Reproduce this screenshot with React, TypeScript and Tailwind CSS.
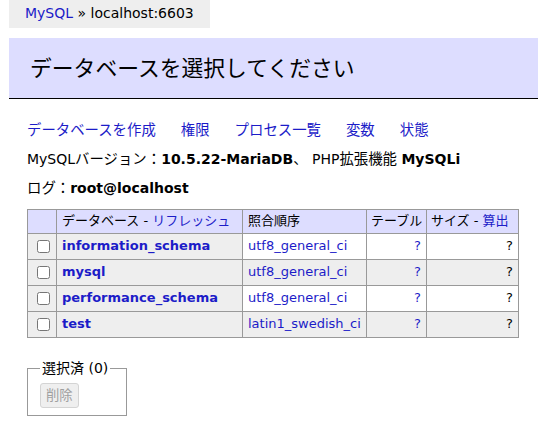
import React from 'react';

const databases = [
  { name: 'information_schema', collation: 'utf8_general_ci' },
  { name: 'mysql', collation: 'utf8_general_ci' },
  { name: 'performance_schema', collation: 'utf8_general_ci' },
  { name: 'test', collation: 'latin1_swedish_ci' },
];

const links = ['データベースを作成', '権限', 'プロセス一覧', '変数', '状態'];

const App: React.FC = () => {
  return (
    <div className="min-h-[439px] bg-white text-black text-[14px] leading-[17.5px] font-['DejaVu_Sans','Noto_Sans_CJK_JP',sans-serif]">
      {/* breadcrumb */}
      <div className="ml-[9px] inline-flex items-center h-[28px] px-[16px] bg-[#eee] whitespace-nowrap">
        <a className="text-[#1c1cc8]">MySQL</a>
        <span>&nbsp;» localhost:6603</span>
      </div>

      <div className="pl-[27px] pr-[12px] pt-[10px]">
        <h2 className="-ml-[18px] bg-[#ddf] border-b border-black pl-[21px] pt-[17px] pb-[16px] text-[21.8px] leading-[27px] font-normal">
          データベースを選択してください
        </h2>

        <p className="mt-[23px] flex text-[14.4px]">
          {links.map((l) => (
            <a key={l} className="text-[#1c1cc8] mr-[25px] whitespace-nowrap">{l}</a>
          ))}
        </p>

        <p className="mt-[11px]">
          MySQL<span className="text-[14.4px]">バージョン：</span><b>10.5.22-MariaDB</b>
          <span className="text-[14.4px]">、</span> PHP<span className="text-[14.4px]">拡張機能</span> <b>MySQLi</b>
        </p>

        <p className="mt-[12px]">
          <span className="text-[14.4px]">ログ：</span><b>root@localhost</b>
        </p>

        <table className="mt-[11px] border-collapse table-fixed w-[491px] text-[13px] leading-[16px]">
          <colgroup>
            <col className="w-[29px]" />
            <col className="w-[186px]" />
            <col className="w-[124px]" />
            <col className="w-[60px]" />
            <col className="w-[92px]" />
          </colgroup>
          <thead>
            <tr className="h-[24px] bg-[#ddf]">
              <td className="border border-[#999]"></td>
              <th className="border border-[#999] px-[5px] text-left font-normal whitespace-nowrap">
                データベース - <a className="text-[#1c1cc8]">リフレッシュ</a>
              </th>
              <td className="border border-[#999] px-[5px] whitespace-nowrap">照合順序</td>
              <td className="border border-[#999] px-[4px] whitespace-nowrap">テーブル</td>
              <td className="border border-[#999] px-[4px] whitespace-nowrap">
                サイズ - <a className="text-[#1c1cc8]">算出</a>
              </td>
            </tr>
          </thead>
          <tbody>
            {databases.map((db, i) => {
              const stripe = i % 2 === 1 ? 'bg-[#eee]' : 'bg-white';
              return (
                <tr key={db.name} className="h-[26px]">
                  <td className="border border-[#999] bg-[#eee] pl-[9px]">
                    <input type="checkbox" className="block w-[13px] h-[13px] m-0" />
                  </td>
                  <th className="border border-[#999] bg-[#eee] px-[5px] text-left font-bold whitespace-nowrap">
                    <a className="text-[#1c1cc8]">{db.name}</a>
                  </th>
                  <td className={`border border-[#999] px-[5px] whitespace-nowrap ${stripe}`}>
                    <a className="text-[#1c1cc8]">{db.collation}</a>
                  </td>
                  <td className={`border border-[#999] px-[5px] text-right ${stripe}`}>
                    <a className="text-[#1c1cc8]">?</a>
                  </td>
                  <td className={`border border-[#999] px-[5px] text-right ${stripe}`}>?</td>
                </tr>
              );
            })}
          </tbody>
        </table>

        <fieldset className="mt-[22px] inline-block border border-[#999] pl-[12px] pr-[16px] pb-[7px] pt-[6px] m-0">
          <legend className="px-[2px]">選択済 (0)</legend>
          <button
            disabled
            className="block h-[25px] px-[5px] bg-[#efefef] border border-[#d4d4d4] rounded-[3px] text-[13.33px] leading-[23px] text-[#a0a0a0]"
          >
            削除
          </button>
        </fieldset>
      </div>
    </div>
  );
};

export default App;
